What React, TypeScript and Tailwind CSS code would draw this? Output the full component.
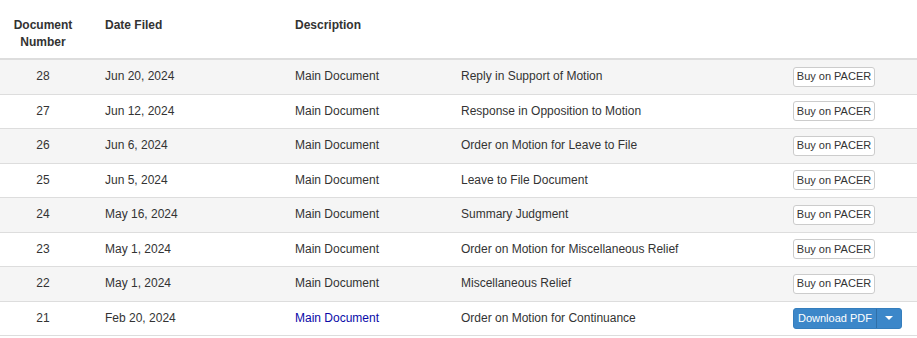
import React from 'react';

type Entry = {
    num: number;
    date: string;
    desc: string;
    download?: boolean;
};

const entries: Entry[] = [
    { num: 28, date: 'Jun 20, 2024', desc: 'Reply in Support of Motion' },
    { num: 27, date: 'Jun 12, 2024', desc: 'Response in Opposition to Motion' },
    { num: 26, date: 'Jun 6, 2024', desc: 'Order on Motion for Leave to File' },
    { num: 25, date: 'Jun 5, 2024', desc: 'Leave to File Document' },
    { num: 24, date: 'May 16, 2024', desc: 'Summary Judgment' },
    { num: 23, date: 'May 1, 2024', desc: 'Order on Motion for Miscellaneous Relief' },
    { num: 22, date: 'May 1, 2024', desc: 'Miscellaneous Relief' },
    { num: 21, date: 'Feb 20, 2024', desc: 'Order on Motion for Continuance', download: true },
];

export default function App() {
    return (
        <div className="w-[917px] bg-white text-[12px] leading-[17px] text-[#333] font-['Liberation_Sans',Arial,sans-serif]">
            {/* Header */}
            <div className="flex h-[60px] border-b-2 border-[#ddd] pt-[17px] font-bold">
                <div className="w-[86px] text-center">
                    Document
                    <br />
                    Number
                </div>
                <div className="w-[209px] pl-[19px]">Date Filed</div>
                <div className="flex-1">Description</div>
            </div>

            {/* Rows */}
            {entries.map((e, i) => (
                <div
                    key={e.num}
                    className={`flex h-[34.5px] items-center border-b border-[#ddd] ${i % 2 === 0 ? 'bg-[#f5f5f5]' : 'bg-white'}`}
                >
                    <div className="w-[86px] text-center">{e.num}</div>
                    <div className="w-[209px] pl-[19px]">{e.date}</div>
                    <div className="w-[166px]">
                        {e.download ? <a className="text-[#0a0aa8]">Main Document</a> : 'Main Document'}
                    </div>
                    <div className="w-[332px]">{e.desc}</div>
                    <div className="flex-1 text-[11px]">
                        {e.download ? (
                            <div className="inline-flex h-[21px] rounded-[3px] border border-[#357ebd] bg-[#3c87c9] text-white">
                                <span className="flex w-[82px] items-center justify-center">Download PDF</span>
                                <span className="flex w-[25px] items-center justify-center border-l border-[#2f6fa8]">
                                    <span className="h-0 w-0 border-x-[4px] border-t-[4px] border-x-transparent border-t-white" />
                                </span>
                            </div>
                        ) : (
                            <button className="h-[20px] w-[82px] rounded-[3px] border border-[#ccc] bg-white text-[#333]">
                                Buy on PACER
                            </button>
                        )}
                    </div>
                </div>
            ))}
        </div>
    );
}
